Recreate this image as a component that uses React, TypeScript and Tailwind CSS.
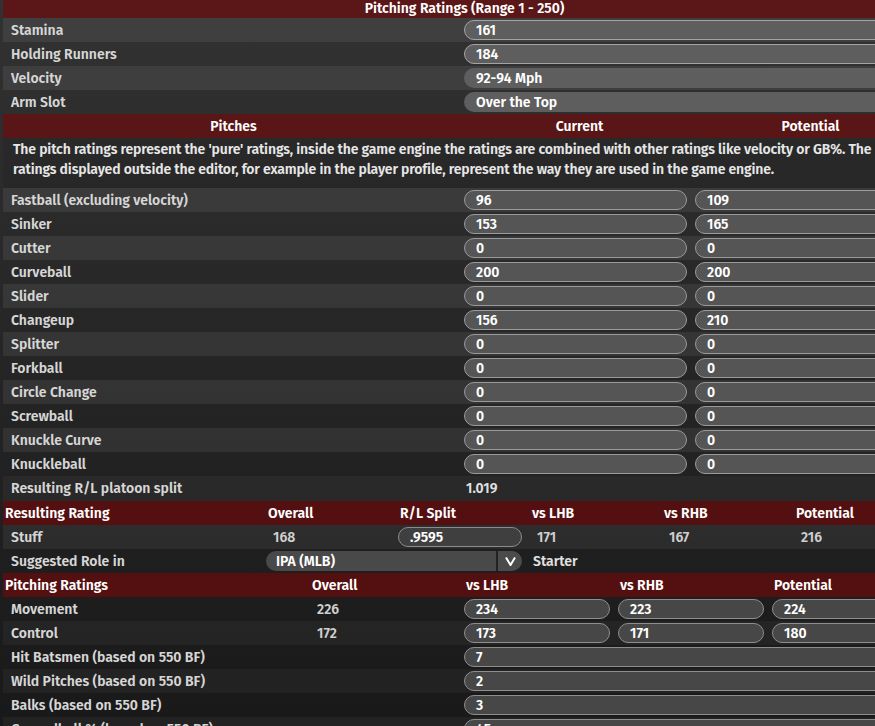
import React from "react";

const FONT = { fontFamily: '"Fira Sans", Lato, "Noto Sans", sans-serif' };

function Pill({ value, tone = "top", border = true, className = "" }: { value: string; tone?: "top" | "mid" | "low" | "bot"; border?: boolean; className?: string }) {
  const toneCls =
    tone === "top"
      ? "bg-[#5e5e5e] border-[#a4a4a4]"
      : tone === "mid"
      ? "bg-[#555555] border-[#9a9a9a]"
      : tone === "low"
      ? "bg-[#3f3f3f] border-[#8c8c8c]"
      : "bg-[#474747] border-[#8e8e8e]";
  return (
    <div
      className={`h-[20px] rounded-full flex items-center pl-[11px] pt-[1px] text-white font-semibold text-[14px] leading-none ${toneCls} ${
        border ? "border" : "border border-transparent"
      } ${className}`}
    >
      {value}
    </div>
  );
}

const pitches: [string, string, string][] = [
  ["Fastball (excluding velocity)", "96", "109"],
  ["Sinker", "153", "165"],
  ["Cutter", "0", "0"],
  ["Curveball", "200", "200"],
  ["Slider", "0", "0"],
  ["Changeup", "156", "210"],
  ["Splitter", "0", "0"],
  ["Forkball", "0", "0"],
  ["Circle Change", "0", "0"],
  ["Screwball", "0", "0"],
  ["Knuckle Curve", "0", "0"],
  ["Knuckleball", "0", "0"],
];

export default function App() {
  return (
    <div className="w-[875px] h-[726px] overflow-hidden bg-gradient-to-b from-[#323232] to-[#191919]" style={FONT}>
      <div className="ml-[3px] w-[923px] text-[14px] text-[#d6d6d6] font-semibold">
        {/* top header */}
        <div className="h-[18px] bg-[#5b1617] flex items-center justify-center text-white text-[14px] leading-none">
          Pitching Ratings (Range 1 - 250)
        </div>
        {/* basic rows */}
        {[
          ["Stamina", "161", true],
          ["Holding Runners", "184", true],
          ["Velocity", "92-94 Mph", false],
          ["Arm Slot", "Over the Top", false],
        ].map(([label, val, b], i) => (
          <div key={label as string} className={`h-[24px] flex items-center ${i % 2 === 0 ? "bg-white/[0.07]" : ""}`}>
            <div className="w-[461px] pl-[8px] pt-[1px]">{label}</div>
            <Pill value={val as string} border={b as boolean} tone="top" className="flex-1" />
          </div>
        ))}
        {/* pitches header */}
        <div className="h-[24px] bg-[#5a1517] flex items-center text-white">
          <div className="w-[461px] text-center">Pitches</div>
          <div className="w-[231px] text-center">Current</div>
          <div className="w-[231px] text-center">Potential</div>
        </div>
        <div className="h-[50px] pl-[10px] pt-[2px] leading-[20px] tracking-[-0.14px] text-[#e6e6e6] whitespace-nowrap bg-black/[0.08]">
          The pitch ratings represent the 'pure' ratings, inside the game engine the ratings are combined with other ratings like velocity or GB%. The pitch
          <br />
          ratings displayed outside the editor, for example in the player profile, represent the way they are used in the game engine.
        </div>
        {pitches.map(([label, cur, pot], i) => (
          <div key={label} className={`h-[24px] flex items-center ${i % 2 === 0 ? "bg-white/[0.07]" : ""}`}>
            <div className="w-[461px] pl-[8px] pt-[1px]">{label}</div>
            <div className="w-[231px] pr-[8px]">
              <Pill value={cur} tone="mid" />
            </div>
            <div className="w-[231px] pr-[8px]">
              <Pill value={pot} tone="mid" />
            </div>
          </div>
        ))}
        <div className="h-[25px] flex items-center bg-white/[0.04]">
          <div className="w-[461px] pl-[8px]">Resulting R/L platoon split</div>
          <div className="pl-[2px] text-[#e0e0e0]">1.019</div>
        </div>
        {/* resulting rating */}
        <div className="h-[24px] bg-[#540f10] flex items-center text-white">
          <div className="w-[263px] pl-[2px]">Resulting Rating</div>
          <div className="w-[132px] pl-[2px]">Overall</div>
          <div className="w-[132px] pl-[2px]">R/L Split</div>
          <div className="w-[132px] pl-[2px]">vs LHB</div>
          <div className="w-[132px] pl-[2px]">vs RHB</div>
          <div className="w-[132px] pl-[2px]">Potential</div>
        </div>
        <div className="h-[24px] flex items-center bg-white/[0.06]">
          <div className="w-[263px] pl-[8px]">Stuff</div>
          <div className="w-[132px] pl-[7px] text-[#cfcfcf]">168</div>
          <div className="w-[132px] pr-[8px]">
            <Pill value=".9595" tone="low" className="pl-[9px]" />
          </div>
          <div className="w-[132px] pl-[7px] text-[#cfcfcf]">171</div>
          <div className="w-[132px] pl-[7px] text-[#cfcfcf]">167</div>
          <div className="w-[132px] pl-[7px] text-[#cfcfcf]">216</div>
        </div>
        <div className="h-[24px] flex items-center">
          <div className="w-[263px] pl-[8px]">Suggested Role in</div>
          <div className="w-[256px] h-[20px] flex">
            <div className="flex-1 rounded-l-full bg-[#494949] flex items-center pl-[10px] text-white">IPA (MLB)</div>
            <div className="w-[2px] bg-[#222]" />
            <div className="w-[24px] rounded-r-full bg-[#4b4b4b] flex items-center justify-center text-white">
              <svg width="11" height="10" viewBox="0 0 11 10">
                <path d="M1 1.5 L5.5 9 L10 1.5" stroke="white" strokeWidth="2" fill="none" />
              </svg>
            </div>
          </div>
          <div className="pl-[11px] text-[#e0e0e0]">Starter</div>
        </div>
        {/* pitching ratings */}
        <div className="h-[24px] bg-[#540f10] flex items-center text-white">
          <div className="w-[307px] pl-[2px]">Pitching Ratings</div>
          <div className="w-[154px] pl-[2px]">Overall</div>
          <div className="w-[154px] pl-[2px]">vs LHB</div>
          <div className="w-[154px] pl-[2px]">vs RHB</div>
          <div className="w-[154px] pl-[2px]">Potential</div>
        </div>
        {[
          ["Movement", "226", "234", "223", "224"],
          ["Control", "172", "173", "171", "180"],
        ].map(([label, ov, l, r, p], i) => (
          <div key={label} className={`h-[24px] flex items-center ${i % 2 === 1 ? "bg-white/[0.04]" : ""}`}>
            <div className="w-[307px] pl-[8px]">{label}</div>
            <div className="w-[154px] pl-[7px] text-[#cfcfcf]">{ov}</div>
            <div className="w-[154px] pr-[8px]">
              <Pill value={l} tone="bot" />
            </div>
            <div className="w-[154px] pr-[8px]">
              <Pill value={r} tone="bot" />
            </div>
            <div className="w-[154px] pr-[8px]">
              <Pill value={p} tone="bot" />
            </div>
          </div>
        ))}
        {[
          ["Hit Batsmen (based on 550 BF)", "7"],
          ["Wild Pitches (based on 550 BF)", "2"],
          ["Balks (based on 550 BF)", "3"],
          ["Groundball % (based on 550 BF)", "45"],
        ].map(([label, v], i) => (
          <div key={label} className={`h-[24px] flex items-center ${i % 2 === 1 ? "bg-white/[0.04]" : ""}`}>
            <div className="w-[461px] pl-[8px]">{label}</div>
            <Pill value={v} tone="bot" className="flex-1" />
          </div>
        ))}
      </div>
    </div>
  );
}
